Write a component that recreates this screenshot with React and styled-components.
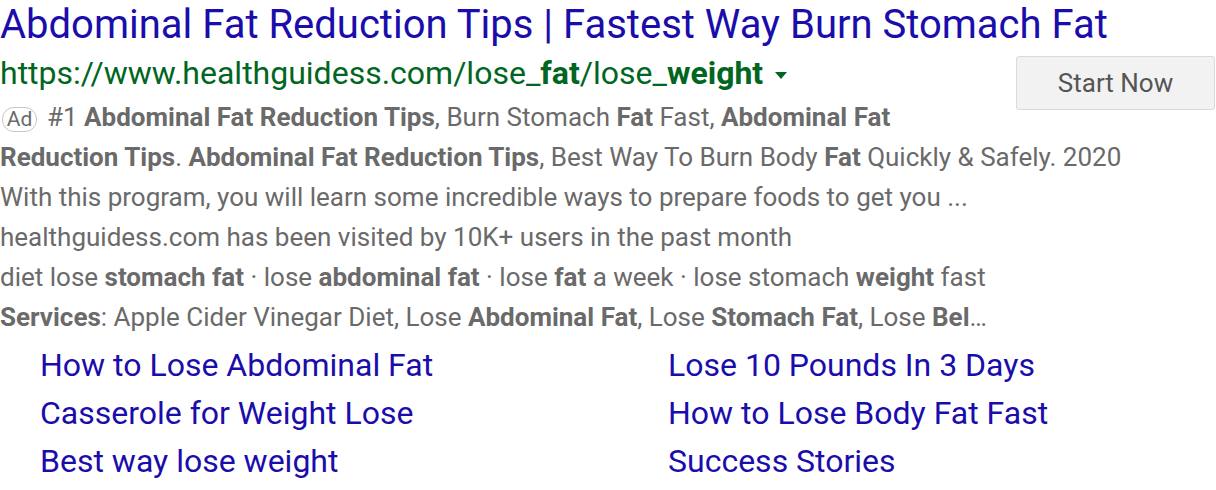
import styled, { createGlobalStyle } from "styled-components";

const Global = createGlobalStyle`
  body {
    margin: 0;
    background: #fff;
    font-family: Roboto, "Liberation Sans", Arial, sans-serif;
  }
`;

const Ad = styled.div`
  width: 1216px;
`;

const Title = styled.a`
  display: block;
  font-size: 40px;
  line-height: 50px;
  color: #1a0dab;
  text-decoration: none;
  white-space: nowrap;
`;

const Body = styled.div`
  overflow: hidden;
`;

const StartButton = styled.button`
  float: right;
  margin: 6px 1px 0 16px;
  width: 199px;
  height: 54px;
  background: #f2f2f2;
  border: 1px solid #dadada;
  border-radius: 3px;
  font-family: inherit;
  font-size: 26px;
  color: #555;
  cursor: pointer;
`;

const UrlLine = styled.div`
  font-size: 32px;
  line-height: 47px;
  color: #006621;
  display: flex;
  align-items: center;
  b {
    font-weight: 700;
  }
`;

const Caret = styled.span`
  display: inline-block;
  margin-left: 12px;
  margin-top: 4px;
  border-left: 6px solid transparent;
  border-right: 6px solid transparent;
  border-top: 7px solid #006621;
`;

const Desc = styled.div`
  font-size: 26px;
  line-height: 40px;
  color: #6a6a6a;
  b {
    font-weight: 700;
  }
`;

const Line = styled.div`
  white-space: nowrap;
`;

const Badge = styled.span`
  display: inline-block;
  box-sizing: border-box;
  width: 35px;
  height: 25px;
  line-height: 23px;
  margin: 0 10px 0 2px;
  border: 1px solid #c6c6c6;
  border-radius: 12px;
  font-size: 21px;
  text-align: center;
  color: #6a6a6a;
`;

const Sitelinks = styled.div`
  display: grid;
  grid-template-columns: 628px 1fr;
  padding-left: 40px;
  margin-top: 4px;
`;

const Sitelink = styled.a`
  font-size: 32px;
  line-height: 48px;
  color: #1a0dab;
  text-decoration: none;
  white-space: nowrap;
`;

const links = [
  "How to Lose Abdominal Fat",
  "Lose 10 Pounds In 3 Days",
  "Casserole for Weight Lose",
  "How to Lose Body Fat Fast",
  "Best way lose weight",
  "Success Stories",
];

export default function App() {
  return (
    <>
      <Global />
      <Ad>
        <Title href="#">
          Abdominal Fat Reduction Tips | Fastest Way Burn Stomach Fat
        </Title>
        <Body>
          <StartButton>Start Now</StartButton>
          <UrlLine>
            <span>
              https://www.healthguidess.com/lose_<b>fat</b>/lose_<b>weight</b>
            </span>
            <Caret />
          </UrlLine>
          <Desc>
            <Line>
              <Badge>Ad</Badge>#1 <b>Abdominal Fat Reduction Tips</b>, Burn
              Stomach <b>Fat</b> Fast, <b>Abdominal Fat</b>
            </Line>
            <Line>
              <b>Reduction Tips</b>. <b>Abdominal Fat Reduction Tips</b>, Best
              Way To Burn Body <b>Fat</b> Quickly &amp; Safely. 2020
            </Line>
            <Line>
              With this program, you will learn some incredible ways to prepare
              foods to get you ...
            </Line>
            <Line>healthguidess.com has been visited by 10K+ users in the past month</Line>
            <Line>
              diet lose <b>stomach fat</b> · lose <b>abdominal fat</b> · lose{" "}
              <b>fat</b> a week · lose stomach <b>weight</b> fast
            </Line>
            <Line>
              <b>Services</b>: Apple Cider Vinegar Diet, Lose{" "}
              <b>Abdominal Fat</b>, Lose <b>Stomach Fat</b>, Lose <b>Bel</b>…
            </Line>
          </Desc>
        </Body>
        <Sitelinks>
          {links.map((l) => (
            <Sitelink key={l} href="#">
              {l}
            </Sitelink>
          ))}
        </Sitelinks>
      </Ad>
    </>
  );
}
